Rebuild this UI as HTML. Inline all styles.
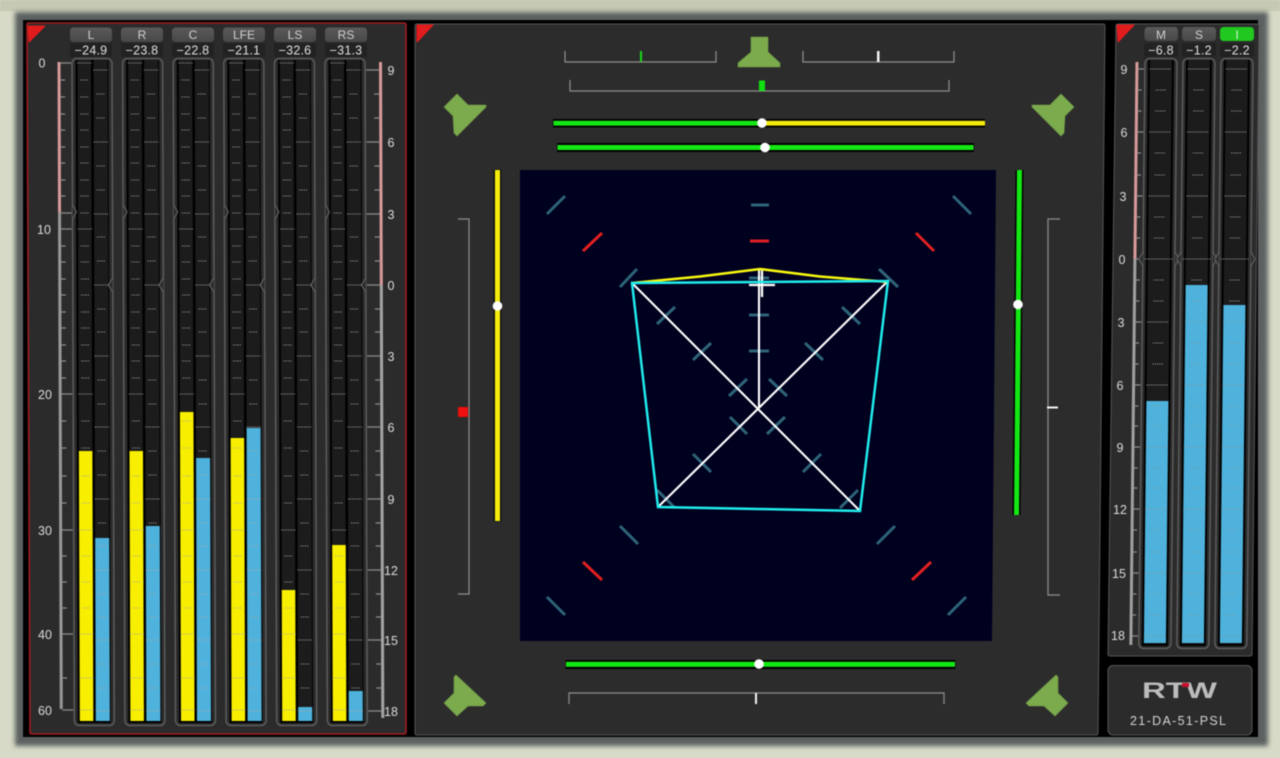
<!DOCTYPE html>
<html lang="en"><head><meta charset="utf-8"><title>RTW 21-DA-51-PSL</title>
<style>
html,body{margin:0;padding:0;width:1280px;height:758px;overflow:hidden;background:#d6dac6}
svg{display:block;position:absolute;left:0;top:0;filter:blur(.4px)}
text{font-family:"Liberation Sans",sans-serif;fill:#e0e0e0}
.v{font-size:12.5px;text-anchor:middle;letter-spacing:.2px}
.h{font-size:12px;text-anchor:middle;fill:#d0d0d0}
.s{font-size:12.5px;text-anchor:middle;fill:#dcdcdc}
</style></head><body>
<svg width="1280" height="758" viewBox="0 0 1280 758" xmlns="http://www.w3.org/2000/svg">
<defs>
<linearGradient id="btn" x1="0" y1="0" x2="0" y2="1"><stop offset="0" stop-color="#5a5a5a"/><stop offset="1" stop-color="#484848"/></linearGradient>
<filter id="sh" x="-5%" y="-5%" width="110%" height="110%"><feGaussianBlur stdDeviation="2.5"/></filter>
<path id="lt" fill="none" stroke="#a8a8a8" stroke-width="1.100" stroke-dasharray="1 1.200" d="M-7 63H7M-4 80H4M-4 97H4M-4 114H4M-4 130H4M-4 147H4M-4 163H4M-4 180H4M-4 196H4M-4 213H4M-7 229H7M-4 246H4M-4 262H4M-4 279H4M-4 295H4M-4 312H4M-4 328H4M-4 345H4M-4 361H4M-4 378H4M-7 394H7M-4 421H4M-4 448H4M-4 476H4M-4 503H4M-7 530H7M-4 556H4M-4 582H4M-4 608H4M-7 634H7M-7 678H7M-7 710H7"/>
<path id="rt" fill="none" stroke="#a8a8a8" stroke-width="1.100" stroke-dasharray="1 1.200" d="M-7 70H7M-4 94H4M-4 118H4M-7 142H7M-4 166H4M-4 190H4M-7 214H7M-4 237H4M-4 261H4M-7 285H7M-4 309H4M-4 332H4M-7 356H7M-4 380H4M-4 404H4M-7 427H7M-4 451H4M-4 475H4M-7 499H7M-4 523H4M-4 546H4M-7 570H7M-4 594H4M-4 617H4M-7 640H7M-4 664H4M-4 688H4M-7 711H7"/>
<g id="lm">
<rect x="0" y="58.500" width="40" height="667" rx="5" fill="#2b2b2b" stroke="#5c5c5c" stroke-width="1.500"/>
<rect x="3.500" y="60" width="33" height="663" fill="#000"/>
<rect x="5.500" y="60" width="13.500" height="661" fill="#1c1c1c"/>
<rect x="21.500" y="60" width="14" height="661" fill="#1c1c1c"/>
<path d="M40 278L35.500 285L40 292M0 205L4 212L0 219" fill="#2b2b2b" stroke="#606060" stroke-width="1.200"/>
</g>
<g id="rm">
<rect x="0" y="58.500" width="32" height="590" rx="5" fill="#2b2b2b" stroke="#5c5c5c" stroke-width="1.500"/>
<rect x="3" y="60" width="26" height="586" fill="#000"/>
<rect x="5" y="60" width="22" height="584" fill="#1c1c1c"/>
<path d="M0 252L-4 259L0 266M32 252L36 259L32 266" fill="#2b2b2b" stroke="#606060" stroke-width="1.200"/>
<path fill="none" stroke="#a8a8a8" stroke-width="1.100" stroke-dasharray="1 1.200" d="M5 69H27M11 90H21M11 111H21M5 132H27M11 153H21M11 175H21M5 196H27M11 217H21M11 238H21M2 259H30M11 280H21M11 301H21M5 322H27M11 343H21M11 364H21M5 385H27M11 406H21M11 426H21M5 447H27M11 468H21M11 488H21M5 509H27M11 530H21M11 552H21M5 573H27M11 594H21M11 615H21M5 636H27"/>
</g>
</defs>

<!-- housing -->
<rect x="0" y="0" width="1280" height="11" fill="#c6cab4"/>
<rect x="15" y="12" width="1253" height="734" fill="#5c6060" filter="url(#sh)"/>
<rect x="23" y="20" width="1235" height="717" fill="#000"/>

<!-- left panel -->
<path d="M28 23H404Q406 23 406 25V732Q406 734 404 734H32Q30 734 30 732L27 25Q27 23 28 23Z" fill="#2b2b2b" stroke="#a01c20" stroke-width="1.600"/>
<path d="M28 26H45L29 42Z" fill="#e01c1c" stroke="#e01c1c" stroke-linejoin="round"/>

<g>
<rect x="70" y="27.500" width="42" height="14.500" rx="3.500" fill="url(#btn)"/><text class="h" x="91" y="39">L</text>
<rect x="121" y="27.500" width="42" height="14.500" rx="3.500" fill="url(#btn)"/><text class="h" x="142" y="39">R</text>
<rect x="172" y="27.500" width="42" height="14.500" rx="3.500" fill="url(#btn)"/><text class="h" x="193" y="39">C</text>
<rect x="223" y="27.500" width="42" height="14.500" rx="3.500" fill="url(#btn)"/><text class="h" x="244" y="39">LFE</text>
<rect x="274" y="27.500" width="42" height="14.500" rx="3.500" fill="url(#btn)"/><text class="h" x="295" y="39">LS</text>
<rect x="325" y="27.500" width="42" height="14.500" rx="3.500" fill="url(#btn)"/><text class="h" x="346" y="39">RS</text>
<rect x="70" y="43" width="42" height="14" fill="#222"/><text class="v" x="91" y="54.500">−24.9</text>
<rect x="121" y="43" width="42" height="14" fill="#222"/><text class="v" x="142" y="54.500">−23.8</text>
<rect x="172" y="43" width="42" height="14" fill="#222"/><text class="v" x="193" y="54.500">−22.8</text>
<rect x="223" y="43" width="42" height="14" fill="#222"/><text class="v" x="244" y="54.500">−21.1</text>
<rect x="274" y="43" width="42" height="14" fill="#222"/><text class="v" x="295" y="54.500">−32.6</text>
<rect x="325" y="43" width="42" height="14" fill="#222"/><text class="v" x="346" y="54.500">−31.3</text>
</g>

<!-- left meters -->
<g transform="matrix(1 0 .0035 1 -.21 0)">
<rect x="57.500" y="62" width="3" height="150" fill="#d89a9a"/>
<rect x="57.500" y="212" width="3" height="497" fill="#989898"/>
<path stroke="#8c8c8c" stroke-width="1.200" fill="none" d="M60 63H71M60 80H65M60 97H65M60 114H65M60 130H65M60 147H65M60 163H65M60 180H65M60 196H65M60 213H71M60 229H71M60 246H65M60 262H65M60 279H65M60 295H65M60 312H65M60 328H65M60 345H65M60 361H65M60 378H65M60 394H71M60 421H65M60 448H65M60 476H65M60 503H65M60 530H71M60 556H65M60 582H65M60 608H65M60 634H71M60 678H65M60 710H71"/>
<rect x="379" y="62" width="3" height="223" fill="#d89a9a"/>
<rect x="379" y="285" width="3" height="433" fill="#a4a4a4"/>
<path stroke="#8c8c8c" stroke-width="1.200" fill="none" d="M366 70H379M374 94H379M374 118H379M366 142H379M374 166H379M374 190H379M366 214H379M374 237H379M374 261H379M366 285H379M374 309H379M374 332H379M366 356H379M374 380H379M374 404H379M366 427H379M374 451H379M374 475H379M366 499H379M374 523H379M374 546H379M366 570H379M374 594H379M374 617H379M366 640H379M374 664H379M374 688H379M366 711H379"/>

<use href="#lm" x="72"/><use href="#lm" x="122.600"/><use href="#lm" x="173.200"/><use href="#lm" x="223.800"/><use href="#lm" x="274.400"/><use href="#lm" x="325"/>

<g fill="#f8ee00">
<rect x="77.500" y="451" width="13.500" height="270"/><rect x="128.100" y="451" width="13.500" height="270"/><rect x="178.700" y="412" width="13.500" height="309"/><rect x="229.300" y="438" width="13.500" height="283"/><rect x="279.900" y="590" width="13.500" height="131"/><rect x="330.500" y="545" width="13.500" height="176"/>
</g>
<g fill="#4eb2dc">
<rect x="93.500" y="538" width="14" height="183"/><rect x="144.100" y="526" width="14" height="195"/><rect x="194.700" y="458" width="14" height="263"/><rect x="245.300" y="428" width="14" height="293"/><rect x="295.900" y="707" width="14" height="14"/><rect x="346.500" y="691" width="14" height="30"/>
</g>
<use href="#lt" x="84.300"/><use href="#lt" x="134.900"/><use href="#lt" x="185.500"/><use href="#lt" x="236.100"/><use href="#lt" x="286.700"/><use href="#lt" x="337.300"/>
<use href="#rt" x="100.500"/><use href="#rt" x="151.100"/><use href="#rt" x="201.700"/><use href="#rt" x="252.300"/><use href="#rt" x="302.900"/><use href="#rt" x="353.500"/>
</g>

<g>
<text class="s" x="42" y="67.500">0</text><text class="s" x="44" y="234">10</text><text class="s" x="45" y="399">20</text><text class="s" x="45" y="535">30</text><text class="s" x="45" y="639">40</text><text class="s" x="45" y="715">60</text>
<text class="s" x="391" y="75">9</text><text class="s" x="391" y="147">6</text><text class="s" x="391" y="219">3</text><text class="s" x="391" y="290">0</text><text class="s" x="391" y="361">3</text><text class="s" x="391" y="432">6</text><text class="s" x="391" y="504">9</text><text class="s" x="391" y="575">12</text><text class="s" x="391" y="645">15</text><text class="s" x="391" y="716">18</text>
</g>

<!-- center panel -->
<path d="M417 24H1103Q1105 24 1105 26L1098 733Q1098 735 1096 735H417Q415 735 415 733V26Q415 24 417 24Z" fill="#2c2c2c" stroke="#555" stroke-width="1"/>
<path d="M417 25H433L417 42Z" fill="#e01c1c" stroke="#e01c1c" stroke-linejoin="round"/>

<g fill="#7cab4d" stroke="#6f9a46" stroke-width=".6" stroke-linejoin="round">
<path d="M751 37H768V52L780 63V67H738V63L751 52Z"/>
<path d="M457 94L468 105H486V107L457 136L454 133L453 116L444 107Z"/>
<path d="M1061 94L1050 105H1032V107L1061 136L1064 133L1065 116L1074 107Z"/>
<path d="M456 675L486 703L483 706H468L457 716L444 703L454 693V677Z"/>
<path d="M1056 675L1026 703L1029 706H1044L1055 716L1068 703L1058 693V677Z"/>
</g>

<!-- brackets -->
<g fill="none" stroke="#8e8e8e" stroke-width="1.200">
<path d="M565 51V62H716V51M803 51V62H954V51"/>
<path d="M570 80V91H949V80"/>
<path d="M569 704V693H944V704"/>
<path d="M458 219H469V594H458"/>
<path d="M1060 219H1048V595H1060"/>
</g>
<rect x="640" y="51" width="2" height="11" fill="#18d818"/>
<rect x="877" y="51" width="2.500" height="11" fill="#f4f4f4"/>
<rect x="759" y="80.500" width="6" height="10.500" fill="#10e010"/>
<rect x="755" y="693" width="2" height="11" fill="#f4f4f4"/>
<rect x="458" y="407" width="10" height="10" fill="#f01010" stroke="#801414" stroke-width=".5"/>
<rect x="1047" y="406.500" width="11" height="2" fill="#f4f4f4"/>

<!-- balance bars -->
<rect x="553" y="119" width="432" height="8.500" fill="#000"/>
<rect x="553.500" y="120.800" width="209" height="4.800" fill="#14e814"/>
<rect x="762" y="120.800" width="223" height="4.800" fill="#f4ec0c"/>
<circle cx="762" cy="123" r="4.800" fill="#fff"/>
<rect x="557" y="143" width="417" height="9" fill="#000"/>
<rect x="557.500" y="145" width="416" height="5" fill="#14e814"/>
<circle cx="765" cy="147.500" r="4.800" fill="#fff"/>
<rect x="565.500" y="660" width="390" height="9" fill="#000"/>
<rect x="566" y="661.800" width="389" height="5" fill="#14e814"/>
<circle cx="759" cy="664" r="4.800" fill="#fff"/>
<rect x="493.500" y="169.500" width="8" height="352" fill="#111"/>
<rect x="495" y="170" width="5" height="351" fill="#f4ec0c"/>
<circle cx="497.500" cy="306" r="4.800" fill="#fff"/>
<path d="M1019.500 170L1016.500 515" stroke="#000" stroke-width="8" fill="none"/>
<path d="M1019.500 170L1016.500 515" stroke="#14e814" stroke-width="5" fill="none"/>
<circle cx="1018" cy="304.500" r="4.800" fill="#fff"/>

<!-- scope -->
<path d="M520 170H996L992 641H520Z" fill="#00001f"/>
<g fill="none" stroke="#2f6478" stroke-width="3">
<path d="M751 205H769M749 278H769M749 315H769M749 351H769"/>
<path d="M547 214L565 196M620 287L637 269M657 324L675 307M693 360L711 343M729 396L747 379"/>
<path d="M953 196L971 214M879 269L898 287M842 307L860 324M805 343L823 360M769 379L787 396"/>
<path d="M730 417L747 434M693 454L711 472M657 490L675 508M620 526L638 544M547 597L565 615"/>
<path d="M767 434L785 417M803 472L821 454M840 508L858 490M877 544L895 526M948 615L966 597"/>
</g>
<g fill="none" stroke="#e02020" stroke-width="3">
<path d="M750 241H769M583 251L602 233M916 233L934 251M583 562L602 580M912 580L931 562"/>
</g>
<g fill="none" stroke="#fff" stroke-width="2.100">
<path d="M759 268V407M632 283L860 511M888 281L658 507"/>
<path d="M749 285H775M762 270V297" stroke-width="2.300"/>
</g>
<path d="M632 283L700 276.500L760 269L820 276.500L888 282" fill="none" stroke="#f8f810" stroke-width="2.500"/>
<path d="M632 283L760 282L888 281L860 511L658 507Z" fill="none" stroke="#20ecec" stroke-width="2.500"/>

<!-- right panel -->
<path d="M1118 24H1257Q1259 24 1259 26L1252 654Q1252 656 1250 656H1110Q1108 656 1108 654L1116 26Q1116 24 1118 24Z" fill="#2b2b2b" stroke="#555" stroke-width="1"/>
<path d="M1117 25H1134L1118 42Z" fill="#e01c1c" stroke="#e01c1c" stroke-linejoin="round"/>
<rect x="1144.500" y="27" width="33.500" height="14" rx="3.500" fill="url(#btn)"/><text class="h" x="1161" y="39">M</text>
<rect x="1182" y="27" width="34" height="14" rx="3.500" fill="url(#btn)"/><text class="h" x="1199" y="39">S</text>
<rect x="1220" y="27" width="34" height="14" rx="3.500" fill="#20c820"/><text class="h" x="1237" y="39" style="fill:#d8f0d8">I</text>
<rect x="1144" y="43" width="34" height="14" fill="#222"/><text class="v" x="1161" y="54.500">−6.8</text>
<rect x="1182" y="43" width="34" height="14" fill="#222"/><text class="v" x="1199" y="54.500">−1.2</text>
<rect x="1220" y="43" width="34" height="14" fill="#222"/><text class="v" x="1237" y="54.500">−2.2</text>

<g transform="matrix(1 0 -.0105 1 .63 0)">
<rect x="1135.500" y="62" width="3" height="197" fill="#d89a9a"/>
<rect x="1135.500" y="259" width="3" height="386" fill="#a0a0a0"/>
<path stroke="#8c8c8c" stroke-width="1.200" fill="none" d="M1138 69H1144M1138 90H1142M1138 111H1142M1138 132H1144M1138 153H1142M1138 175H1142M1138 196H1144M1138 217H1142M1138 238H1142M1138 259H1145M1138 280H1142M1138 301H1142M1138 322H1144M1138 343H1142M1138 364H1142M1138 385H1144M1138 406H1142M1138 426H1142M1138 447H1144M1138 468H1142M1138 488H1142M1138 509H1144M1138 530H1142M1138 552H1142M1138 573H1144M1138 594H1142M1138 615H1142M1138 636H1144"/>
<use href="#rm" x="1145"/><use href="#rm" x="1183"/><use href="#rm" x="1221"/>
</g>
<g transform="matrix(1 0 -.0105 1 .63 0)" fill="#4eb2dc">
<rect x="1150" y="401" width="22" height="242"/>
<rect x="1188" y="285" width="22" height="358"/>
<rect x="1226" y="305" width="22" height="338"/>
</g>
<g transform="matrix(1 0 -.0105 1 .63 0)" fill="none" stroke="#7a9aa8" stroke-width="1" stroke-dasharray="1 1.200">
<path d="M1150 636H1172M1156 615H1166M1156 594H1166M1150 573H1172M1156 552H1166M1156 530H1166M1150 509H1172M1156 488H1166M1156 468H1166M1150 447H1172M1156 426H1166M1156 406H1166"/>
<path d="M1188 636H1210M1194 615H1204M1194 594H1204M1188 573H1210M1194 552H1204M1194 530H1204M1188 509H1210M1194 488H1204M1194 468H1204M1188 447H1210M1194 426H1204M1194 406H1204M1188 385H1210M1194 364H1204M1194 343H1204M1188 322H1210M1194 301H1204"/>
<path d="M1226 636H1248M1232 615H1242M1232 594H1242M1226 573H1248M1232 552H1242M1232 530H1242M1226 509H1248M1232 488H1242M1232 468H1242M1226 447H1248M1232 426H1242M1232 406H1242M1226 385H1248M1232 364H1242M1232 343H1242M1226 322H1248"/>
</g>
<g>
<text class="s" x="1124" y="74">9</text><text class="s" x="1124" y="137">6</text><text class="s" x="1123" y="201">3</text><text class="s" x="1122" y="264">0</text><text class="s" x="1121" y="327">3</text><text class="s" x="1120" y="390">6</text><text class="s" x="1120" y="452">9</text><text class="s" x="1120" y="514">12</text><text class="s" x="1119" y="578">15</text><text class="s" x="1118" y="640">18</text>
</g>

<!-- logo panel -->
<rect x="1108" y="665.500" width="144" height="69.500" rx="5" fill="#2b2b2b" stroke="#555" stroke-width="1"/>
<text x="1142" y="698" textLength="75" lengthAdjust="spacingAndGlyphs" style="font-size:22.500px;font-weight:bold;fill:#bcbcbc">RTW</text>
<rect x="1182" y="683" width="7" height="4" fill="#c8102e"/>
<text x="1130" y="725" textLength="96" style="font-size:12.500px;fill:#d4d4d4">21-DA-51-PSL</text>
</svg>
</body></html>
